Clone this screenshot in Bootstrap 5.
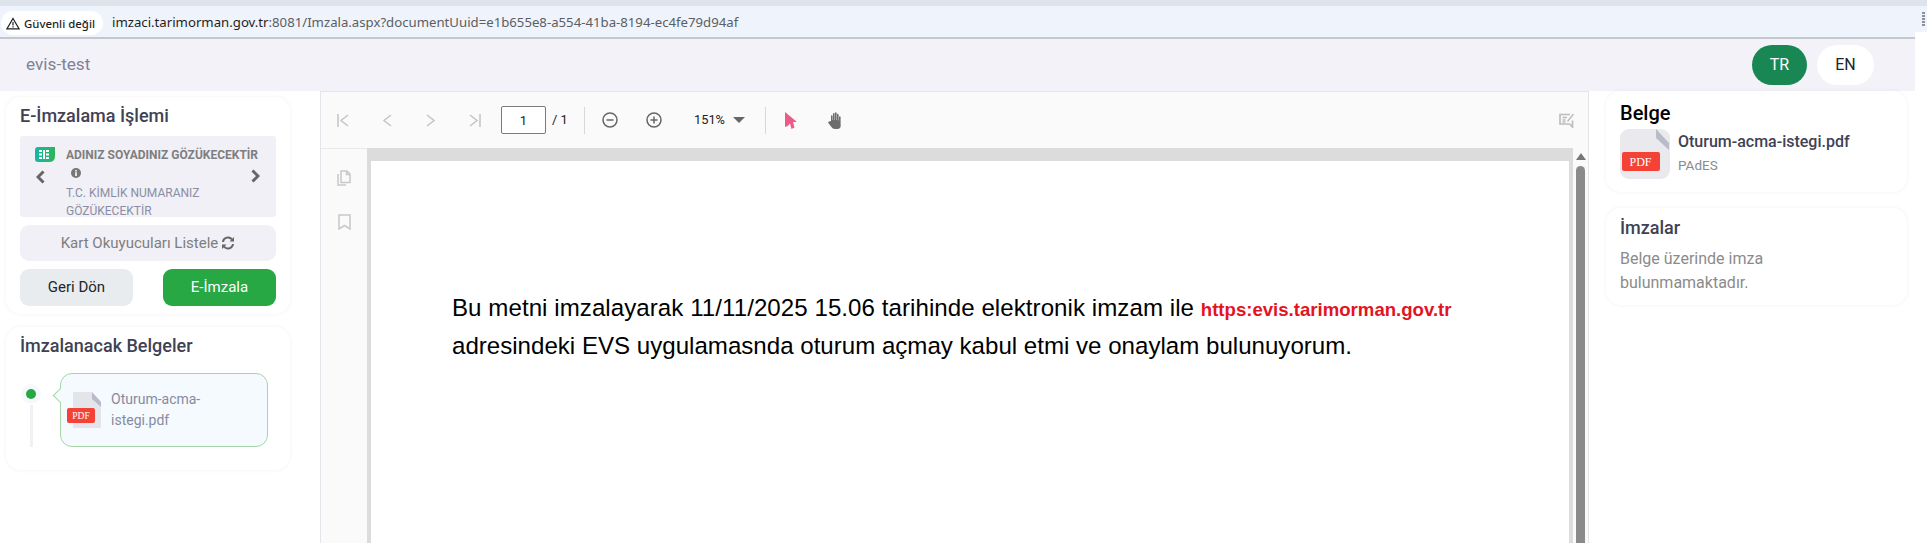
<!DOCTYPE html>
<html lang="tr">
<head>
  <meta charset="UTF-8" />
  <meta name="viewport" content="width=device-width, initial-scale=1.0"/>
  <title>evis-test</title>
  <link href="https://cdn.jsdelivr.net/npm/bootstrap@5.3.3/dist/css/bootstrap.min.css" rel="stylesheet"/>
  <style>
    html, body { height: 543px; overflow: hidden; }
    body { font-family: Roboto, sans-serif; background: #fff; color: #3f4254; }

    /* browser chrome */
    .tabstrip { height: 6px; background: #dfe4ec; }
    .addressbar { height: 26px; background: #eff3fb; padding: 5px 2px 0 1px; }
    .addr-tail { width: 1915px; height: 7px; background: #eff3fb; border-bottom: 2px solid #c4c7cc; }
    .secure-pill { height: 24px; width: 102px; flex: none; background: #fff; border-radius: 12px; font: 500 11.4px "Noto Sans", sans-serif; color: #1f1f1f; gap: 4px; padding-left: 5px; }
    .url-text { font: 13.2px/22px "Noto Sans", sans-serif; color: #5b5e63; margin-left: 9px; }
    .url-text b { font-weight: 400; color: #1f1f1f; }
    .menu-dots { width: 3px; height: 14px; margin-top: 1px; background: repeating-linear-gradient(#8d9098 0 2px, #eff3fb 2px 3px); }

    /* app top bar */
    .app-shell { width: 1915px; }
    .top-bar { height: 52px; background: #f3f2f8; padding: 0 41px 0 26px; }
    .brand-name { font-size: 17.2px; color: #7e8299; }
    .lang-btn { height: 40px; border-radius: 20px; padding: 0; font-size: 16px; border: 0; }
    .lang-tr { width: 55px; background: #198754; color: #fff; }
    .lang-en { width: 57px; background: #fff; color: #212529; }
    .lang-group { gap: 10px; }

    .work-area { height: 452px; }
    .left-col { width: 320px; padding: 6px 30px 0 6px; }
    .right-col { width: 326px; padding: 0 8px 0 17px; }

    .soft-card { border-radius: 15px; background: #fff; box-shadow: 0 0 4px rgba(82,63,105,.07); }
    .sign-card { height: 217px; padding: 0 14px; margin-bottom: 13px; }
    .docs-card { height: 143px; padding: 0 14px; }
    .card-head { font-size: 18px; font-weight: 500; line-height: 22px; color: #3f4254; margin: 0; }
    .sign-card .card-head { padding: 8px 0 9px; }
    .docs-card .card-head { padding: 8px 0 0; }

    .reader-box { height: 81px; background: #f0f0f6; border-radius: 3px; overflow: hidden; padding-left: 15px; }
    .chip-col { width: 31px; flex: none; padding-top: 11px; }
    .chip-col svg { display: block; }
    .chip-back { margin: 8px 0 0 1px; }
    .reader-text { font-size: 12px; line-height: 18px; padding-top: 10px; color: #8b8ea3; width: 166px; flex: none; }
    .reader-text strong { font-weight: 700; color: #7e7e7e; display: block; white-space: nowrap; }
    .info-dot { width: 10px; height: 10px; display: block; margin: 4px 0 6px 5px; }
    .chip-next { flex: none; margin: 33px 0 0 19px; }
    .list-readers { height: 36px; width: 100%; background: #f0f0f6; border: 0; border-radius: 9px; color: #7e7e7e; font-size: 15px; padding: 0; margin: 8px 0; gap: 3px; }
    .action-btn { width: 113px; height: 37px; padding: 0; border: 0; border-radius: 9px; font-size: 15px; }
    .btn-back { background: #e9ecef; color: #212529; }
    .btn-sign { background: #28a745; color: #fff; }

    .timeline { padding-top: 16px; }
    .tl-mark { width: 22px; }
    .tl-dot { width: 10px; height: 10px; border-radius: 50%; background: #28a745; box-shadow: 0 0 0 5px #f6f9fc; margin-top: 16px; flex: none; }
    .tl-line { width: 3px; height: 42px; background: #eff2f5; margin-top: 6px; }
    .doc-bubble { position: relative; width: 208px; height: 74px; margin-left: 18px; background: #f5fafe; border: 1px solid #a5d6a7; border-radius: 12px; padding-left: 6px; gap: 10px; color: #878a9f; font-size: 14px; line-height: 21px; }
    .doc-bubble::before { content: ""; position: absolute; left: -6px; top: 16px; width: 11px; height: 11px; background: #f5fafe; border-left: 1px solid #a5d6a7; border-bottom: 1px solid #a5d6a7; transform: rotate(45deg); }

    /* pdf viewer */
    .viewer { width: 1269px; border: 1px solid #e4e4ea; border-width: 1px 1px 0 1px; background: #fafafa; }
    .viewer-tools { height: 56px; background: #fafafa; padding-right: 13px; }
    .tool-slot { width: 44px; flex: none; text-align: center; line-height: 0; }
    .page-input { width: 45px; height: 28px; border: 1px solid #7a7a7a; border-radius: 2px; background: #fff; font-size: 13px; color: #222; text-align: center; line-height: 28px; margin-left: 4px; flex: none; }
    .page-total { font-size: 13px; color: #222; margin-left: 6px; width: 24px; flex: none; }
    .tool-sep { width: 1px; height: 27px; background: #d8d8d8; margin: 0 3px 0 8px; flex: none; }
    .zoom-level { font-size: 12.8px; color: #222; width: 81px; flex: none; padding-left: 18px; }
    .caret-down { display: inline-block; border: 6px solid transparent; border-top-color: #666; border-bottom: 0; margin-left: 8px; vertical-align: 1px; }
    .edit-tool { line-height: 0; }
    .viewer-body { height: 395px; }
    .viewer-side { width: 46px; background: #fafafa; border-top: 1px solid #e8e8e8; padding: 21px 0 0 0; gap: 28px; }
    .page-well { background: #dcdcdc; padding: 13px 4px 0 4px; }
    .page-sheet { width: 1198px; height: 400px; background: #fff; padding: 129px 0 0 81px; color: #000; font: 24.1px/36px "Liberation Sans", sans-serif; white-space: nowrap; }
    .line-wide { letter-spacing: .054px; }
    .pdf-link { color: #e3141f; font-weight: 700; font-size: 18.6px; letter-spacing: 0; }
    .scroll-track { width: 16px; background: #fafafa; padding-top: 5px; }
    .scroll-up { display: block; margin: 0 auto; width: 0; border: 5px solid transparent; border-bottom: 7px solid #777; border-top: 0; }
    .scroll-thumb { width: 9px; height: 400px; background: #8a8a8a; border-radius: 5px; margin: 6px auto 0; }

    /* right panel */
    .belge-card { height: 101px; padding: 9px 14px; margin-bottom: 16px; }
    .belge-title { font-size: 20px; font-weight: 500; color: #000; line-height: 26px; margin: 0 0 3px; }
    .file-tile { width: 50px; height: 50px; flex: none; }
    .file-name { font-size: 16px; font-weight: 500; color: #3f4254; line-height: 24px; margin-top: 1px; }
    .file-kind { font-size: 13.5px; color: #8b8b8b; line-height: 18px; margin-top: 2px; }
    .sig-card { height: 97px; padding: 9px 14px; }
    .sig-text { font-size: 16px; line-height: 24px; color: #8b8b8b; margin: 8px 0 0; }
  </style>
</head>
<body>

<!-- browser address bar -->
<div class="tabstrip"></div>
<div class="addressbar d-flex align-items-start">
  <div class="secure-pill d-flex align-items-center">
    <svg width="14" height="13" viewBox="0 0 14 13"><path d="M7 1.500 13 11.800H1Z M7 5v3.600 M7 9.300v1.200" fill="none" stroke="#1f1f1f" stroke-width="1.200"/></svg>
    <span>Güvenli değil</span>
  </div>
  <span class="url-text"><b>imzaci.tarimorman.gov.tr</b>:8081/Imzala.aspx?documentUuid=e1b655e8-a554-41ba-8194-ec4fe79d94af</span>
  <span class="menu-dots ms-auto"></span>
</div>
<div class="addr-tail"></div>

<div class="app-shell">
  <!-- top bar -->
  <nav class="top-bar d-flex align-items-center justify-content-between">
    <span class="brand-name">evis-test</span>
    <div class="lang-group d-flex">
      <button class="btn lang-btn lang-tr" type="button">TR</button>
      <button class="btn lang-btn lang-en" type="button">EN</button>
    </div>
  </nav>

  <div class="work-area d-flex">
    <!-- left column -->
    <div class="left-col flex-shrink-0">
      <div class="soft-card sign-card">
        <h5 class="card-head">E-İmzalama İşlemi</h5>
        <div class="reader-box d-flex">
          <div class="chip-col">
            <svg width="20" height="15" viewBox="0 0 20 15">
              <defs><linearGradient id="chipFill" x1="0" x2="1" y1="0" y2="0"><stop offset="0" stop-color="#17b6a6"/><stop offset="1" stop-color="#2fb35a"/></linearGradient></defs>
              <path d="M3 0H20V9Q20 15 14 15H3Q0 15 0 12V3Q0 0 3 0Z" fill="url(#chipFill)"/>
              <path d="M4 3h3v2H4ZM4 6.500h3v2H4ZM4 10h3v2H4ZM8 3h2v9H8ZM11 3h3v2h-3ZM11 6.500h3v2h-3ZM11 10h3v2h-3Z" fill="#fff"/>
            </svg>
            <svg class="chip-back" width="9" height="14" viewBox="0 0 9 14"><path d="M7.500 1.500 2 7l5.500 5.500" fill="none" stroke="#666" stroke-width="3"/></svg>
          </div>
          <div class="reader-text">
            <strong>ADINIZ SOYADINIZ GÖZÜKECEKTİR</strong>
            <svg class="info-dot" viewBox="0 0 10 10"><circle cx="5" cy="5" r="5" fill="#777"/><rect x="4.200" y="4.200" width="1.600" height="3.800" fill="#fff"/><rect x="4.200" y="2" width="1.600" height="1.500" fill="#fff"/></svg>
            T.C. KİMLİK NUMARANIZ<br>GÖZÜKECEKTİR
          </div>
          <svg class="chip-next" width="9" height="14" viewBox="0 0 9 14"><path d="M1.500 1.500 7 7l-5.500 5.500" fill="none" stroke="#666" stroke-width="3"/></svg>
        </div>
        <button class="list-readers d-flex align-items-center justify-content-center" type="button">
          Kart Okuyucuları Listele
          <svg width="14" height="14" viewBox="0 0 14 14"><path d="M2 6a5 5 0 0 1 9-2.500M12 8a5 5 0 0 1-9 2.500" fill="none" stroke="#666" stroke-width="2"/><path d="M13 1v4.500H8.500ZM1 13V8.500h4.500Z" fill="#666"/></svg>
        </button>
        <div class="d-flex justify-content-between">
          <button class="btn action-btn btn-back" type="button">Geri Dön</button>
          <button class="btn action-btn btn-sign" type="button">E-İmzala</button>
        </div>
      </div>

      <div class="soft-card docs-card">
        <h5 class="card-head">İmzalanacak Belgeler</h5>
        <div class="timeline d-flex">
          <div class="tl-mark d-flex flex-column align-items-center">
            <div class="tl-dot"></div>
            <div class="tl-line"></div>
          </div>
          <div class="doc-bubble d-flex align-items-center">
            <svg width="34" height="36" viewBox="0 0 34 36" class="flex-shrink-0">
              <path d="M6 0H25L34 10V36H6Z" fill="#e4e5ea"/><path d="M25 0 34 10V15L25 7Z" fill="#b9bcc8"/>
              <rect x="0" y="16" width="28" height="15" rx="2" fill="#f44336"/>
              <text x="14" y="27" text-anchor="middle" font-family="Liberation Serif, serif" font-size="9.500" fill="#fff">PDF</text>
            </svg>
            <span>Oturum-acma-<br>istegi.pdf</span>
          </div>
        </div>
      </div>
    </div>

    <!-- pdf viewer -->
    <div class="viewer flex-shrink-0">
      <div class="viewer-tools d-flex align-items-center">
        <span class="tool-slot"><svg width="12" height="13" viewBox="0 0 12 13"><path d="M1 0v13M11 1 4 6.500l7 5.500" fill="none" stroke="#c4c4c4" stroke-width="1.500"/></svg></span>
        <span class="tool-slot"><svg width="10" height="13" viewBox="0 0 10 13"><path d="M9 1 2 6.500 9 12" fill="none" stroke="#c4c4c4" stroke-width="1.500"/></svg></span>
        <span class="tool-slot"><svg width="10" height="13" viewBox="0 0 10 13"><path d="M1 1l7 5.500L1 12" fill="none" stroke="#c4c4c4" stroke-width="1.500"/></svg></span>
        <span class="tool-slot"><svg width="12" height="13" viewBox="0 0 12 13"><path d="M11 0v13M1 1l7 5.500L1 12" fill="none" stroke="#c4c4c4" stroke-width="1.500"/></svg></span>
        <span class="page-input">1</span>
        <span class="page-total">/ 1</span>
        <span class="tool-sep"></span>
        <span class="tool-slot"><svg width="16" height="16" viewBox="0 0 16 16"><circle cx="8" cy="8" r="7" fill="none" stroke="#666" stroke-width="1.500"/><path d="M4.500 8h7" stroke="#666" stroke-width="1.500"/></svg></span>
        <span class="tool-slot"><svg width="16" height="16" viewBox="0 0 16 16"><circle cx="8" cy="8" r="7" fill="none" stroke="#666" stroke-width="1.500"/><path d="M4.500 8h7M8 4.500v7" stroke="#666" stroke-width="1.500"/></svg></span>
        <span class="zoom-level">151%<span class="caret-down"></span></span>
        <span class="tool-sep"></span>
        <span class="tool-slot"><svg width="12" height="17" viewBox="0 0 12 17"><path d="M0 0 12 10H8L9.500 15.500 6.500 17 5 11.500 2.500 14 0 15Z" fill="#ec5a87"/></svg></span>
        <span class="tool-slot"><svg width="15" height="17" viewBox="0 0 15 17"><path d="M3 9V4a.8.8 0 0 1 1.600 0V8h.4V1.800a.8.8 0 0 1 1.600 0V8h.4V1a.8.8 0 0 1 1.600 0V8h.4V2.500a.8.8 0 0 1 1.600 0V8.500h.4V5a.8.8 0 0 1 1.600 0V12Q13.600 17 9 17H7Q4.500 17 3 14.500L0 10.500 1 9.500Z" fill="#6c6c6c"/></svg></span>
        <span class="edit-tool ms-auto"><svg width="16" height="16" viewBox="0 0 16 16"><path d="M11 2.500H1V12h9.500l3 3V8.500" fill="none" stroke="#bdbdbd" stroke-width="1.700"/><path d="M3.500 5.500h4.500M3.500 8h3M3.500 10h3M8.500 9.500 14.500 2" fill="none" stroke="#bdbdbd" stroke-width="1.500"/></svg></span>
      </div>
      <div class="viewer-body d-flex">
        <div class="viewer-side d-flex flex-column align-items-center flex-shrink-0">
          <svg width="14" height="16" viewBox="0 0 14 16"><path d="M4 1h6l3 3v8.500H4ZM9.500 1v3.500H13M1 4v11h8" fill="none" stroke="#c8c8c8" stroke-width="1.500"/></svg>
          <svg width="13" height="16" viewBox="0 0 13 16"><path d="M1 1h11v14l-5.500-3.500L1 15Z" fill="none" stroke="#c8c8c8" stroke-width="1.500"/></svg>
        </div>
        <div class="page-well flex-shrink-0">
          <div class="page-sheet">
            <span class="line-wide">Bu metni imzalayarak 11/11/2025 15.06 tarihinde elektronik imzam ile <span class="pdf-link">https:evis.tarimorman.gov.tr</span></span><br>
            adresindeki EVS uygulamasnda oturum açmay kabul etmi ve onaylam bulunuyorum.
          </div>
        </div>
        <div class="scroll-track flex-grow-1">
          <span class="scroll-up"></span>
          <div class="scroll-thumb"></div>
        </div>
      </div>
    </div>

    <!-- right column -->
    <div class="right-col flex-shrink-0">
      <div class="soft-card belge-card">
        <h5 class="belge-title">Belge</h5>
        <div class="d-flex gap-2">
          <svg class="file-tile" viewBox="0 0 50 50">
            <rect width="50" height="50" rx="9" fill="#e9e9ee"/>
            <path d="M36 0 49 14V21L36 9Z" fill="#b9bcc8"/>
            <rect x="2" y="23" width="38" height="19" rx="2" fill="#f44336"/>
            <text x="20.500" y="37" text-anchor="middle" font-family="Liberation Serif, serif" font-size="12" fill="#fff">PDF</text>
          </svg>
          <div>
            <div class="file-name">Oturum-acma-istegi.pdf</div>
            <div class="file-kind">PAdES</div>
          </div>
        </div>
      </div>
      <div class="soft-card sig-card">
        <h5 class="card-head">İmzalar</h5>
        <p class="sig-text">Belge üzerinde imza<br>bulunmamaktadır.</p>
      </div>
    </div>
  </div>
</div>

<script src="https://cdn.jsdelivr.net/npm/bootstrap@5.3.3/dist/js/bootstrap.bundle.min.js"></script>
</body>
</html>
